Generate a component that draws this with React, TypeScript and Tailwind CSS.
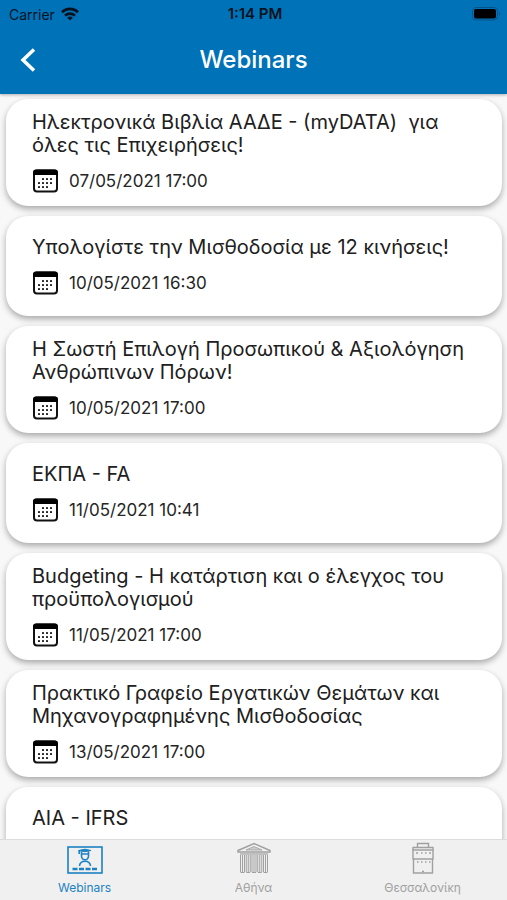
type Webinar = {
  id: number;
  title: string;
  date?: string;
};

type TabKey = 'webinars' | 'athens' | 'thessaloniki';

const webinars: Webinar[] = [
  { id: 1, title: 'Ηλεκτρονικά Βιβλία ΑΑΔΕ - (myDATA)\u00a0 για όλες τις Επιχειρήσεις!', date: '07/05/2021 17:00' },
  { id: 2, title: 'Υπολογίστε την Μισθοδοσία με 12 κινήσεις!', date: '10/05/2021 16:30' },
  { id: 3, title: 'Η Σωστή Επιλογή Προσωπικού & Αξιολόγηση Ανθρώπινων Πόρων!', date: '10/05/2021 17:00' },
  { id: 4, title: 'ΕΚΠΑ - FA', date: '11/05/2021 10:41' },
  { id: 5, title: 'Budgeting - Η κατάρτιση και ο έλεγχος του προϋπολογισμού', date: '11/05/2021 17:00' },
  { id: 6, title: 'Πρακτικό Γραφείο Εργατικών Θεμάτων και Μηχανογραφημένης Μισθοδοσίας', date: '13/05/2021 17:00' },
  { id: 7, title: 'AIA - IFRS' },
];

function WifiIcon() {
  return (
    <svg viewBox="0 0 18 14" className="h-3.5 w-[18px]" fill="none" stroke="#06121d" strokeWidth="2.6">
      <path d="M1 5.2a11.4 11.4 0 0 1 16 0" />
      <path d="M4 8.6a7.2 7.2 0 0 1 10 0" />
      <path d="M9 13.5 6.2 10.8a4 4 0 0 1 5.6 0Z" fill="#06121d" stroke="none" />
    </svg>
  );
}

function BatteryIcon() {
  return (
    <svg viewBox="0 0 29 14" className="h-3.5 w-[29px]">
      <rect x="0.5" y="0.5" width="25" height="12.5" rx="3.5" fill="none" stroke="#045489" />
      <rect x="2" y="2" width="22" height="9.5" rx="2" fill="#000" />
      <path d="M27 4.8c1.6.6 1.6 3.3 0 3.9Z" fill="#045489" />
    </svg>
  );
}

function CalendarIcon() {
  const dots = [
    [10, 10], [14, 10], [18, 10],
    [6, 14], [10, 14], [14, 14], [18, 14],
    [6, 18], [10, 18], [14, 18],
  ];

  return (
    <svg viewBox="0 0 26 24" className="h-6 w-[26px] shrink-0">
      <rect x="2" y="1.5" width="23" height="21" rx="3" fill="#fff" stroke="#111" strokeWidth="2" />
      <path d="M1 6V3.500A3 3 0 0 1 4 .5h19a3 3 0 0 1 3 3V6Z" fill="#000" />
      {dots.map(([x, y]) => (
        <rect key={`${x}-${y}`} x={x} y={y - 1} width="2" height="2" rx="0.6" fill="#222" />
      ))}
    </svg>
  );
}

function LectureIcon() {
  return (
    <svg viewBox="0 0 36 28" className="h-7 w-9" fill="none" stroke="currentColor" strokeWidth="1.6">
      <rect x="1" y="1" width="34" height="26" />
      <path d="M11.500 4.500 18 3.200l6 1.300-6 1.200Z" fill="currentColor" strokeWidth="1" />
      <path d="M12.200 4.500V8" />
      <path d="M14.500 5.500V10a3.500 3.800 0 0 0 7 0V5.500M14.500 8h7" />
      <path d="M12.500 20c.3-3.200 2.500-4.800 5.500-4.800s5.200 1.600 5.500 4.800" />
      <path d="M5.500 23h5M12 23h5M18.500 23h5M25 23h5" strokeWidth="2.600" />
    </svg>
  );
}

function TempleIcon() {
  return (
    <svg viewBox="0 0 34 32" className="h-8 w-[34px]" fill="none" stroke="currentColor">
      <path d="M1 8.500 17 1.500l16 7v1.500H1Z" strokeWidth="1.500" />
      <path d="M9 8 17 4.500 25 8Z" fill="currentColor" fillOpacity=".45" strokeWidth=".8" />
      <path d="M3 12h28" strokeWidth="1.200" />
      {[3.5, 9.25, 15, 20.75, 26.5].map((x) => (
        <path key={x} d={`M${x} 13v17M${x + 2} 13v17M${x + 4} 13v17M${x} 30.500h4`} strokeWidth="1" />
      ))}
    </svg>
  );
}

function TowerIcon() {
  return (
    <svg viewBox="0 0 24 32" className="h-8 w-6" fill="none" stroke="currentColor" strokeWidth="1.400">
      <path d="M6.500 5V1.500h11V5M2 17V5.500h20V17M2.500 17v14h19V17" />
      <path d="M1.500 8h21M1.500 17h21" strokeWidth="1.600" />
      <path d="M5 11h2M10 11h1.500M14 11h1.500M18 11h2M6 20h1.500M10 20h1.500M14 20h1.500M18 20h1.500M11 29.500h2" />
    </svg>
  );
}

function WebinarCard({ webinar }: { webinar: Webinar }) {
  return (
    <li className="flex min-h-[100px] flex-col justify-center gap-3 rounded-[22px] bg-white pt-3 pb-[13px] pr-8 pl-[26px] shadow-[0_3px_6px_rgba(0,0,0,0.32)]">
      <h2 className="text-[20px] leading-[23px] text-[#202020]">{webinar.title}</h2>
      <div className="flex items-center gap-[11px]">
        <CalendarIcon />
        {webinar.date ? <time className="text-[17px] leading-6 text-[#252525]">{webinar.date}</time> : null}
      </div>
    </li>
  );
}

const tabs: { key: TabKey; label: string; icon: React.ReactNode }[] = [
  { key: 'webinars', label: 'Webinars', icon: <LectureIcon /> },
  { key: 'athens', label: 'Αθήνα', icon: <TempleIcon /> },
  { key: 'thessaloniki', label: 'Θεσσαλονίκη', icon: <TowerIcon /> },
];

export default function App() {
  const activeTab: TabKey = 'webinars';

  return (
    <div className="flex h-screen flex-col bg-[#f8f8f8] font-['Inter','Noto_Sans',sans-serif]">
      <header className="relative z-10 shrink-0 bg-[#0072b8] pb-0.5 shadow-[0_1px_3px_rgba(0,0,0,0.3)]">
        <div className="grid h-7 grid-cols-3 items-center pr-1.5 pl-[9px] text-[14px] text-[#06121d]">
          <div className="flex items-center gap-1.5">
            <span>Carrier</span>
            <WifiIcon />
          </div>
          <span className="text-center text-[15px] font-semibold">1:14 PM</span>
          <div className="flex justify-end">
            <BatteryIcon />
          </div>
        </div>
        <div className="grid h-16 grid-cols-[56px_1fr_56px] items-center">
          <button type="button" aria-label="Back" className="flex h-12 items-center pl-5">
            <svg viewBox="0 0 16 24" className="h-6 w-4" fill="none" stroke="#fff" strokeWidth="3.500">
              <path d="M14 1.500 3 12l11 10.500" />
            </svg>
          </button>
          <h1 className="text-center text-[24px] font-medium text-white">Webinars</h1>
        </div>
      </header>

      <main className="min-h-0 flex-1 overflow-y-auto [scrollbar-width:none]">
        <ul className="flex flex-col gap-2.5 pt-[5px] pr-[5px] pb-2.5 pl-1.5">
          {webinars.map((webinar) => (
            <WebinarCard key={webinar.id} webinar={webinar} />
          ))}
        </ul>
      </main>

      <nav className="grid shrink-0 grid-cols-3 border-t border-[#dcdcdc] bg-[#f0f0f0]">
        {tabs.map((tab) => (
          <button
            key={tab.key}
            type="button"
            aria-current={tab.key === activeTab ? 'page' : undefined}
            className={`flex h-[60px] flex-col items-center gap-1 pt-0.5 ${tab.key === activeTab ? 'text-[#1c82c4]' : 'text-[#a0a0a0]'}`}
          >
            <span className="flex h-8 items-end">{tab.icon}</span>
            <span className="text-[12px] leading-5">{tab.label}</span>
          </button>
        ))}
      </nav>
    </div>
  );
}
